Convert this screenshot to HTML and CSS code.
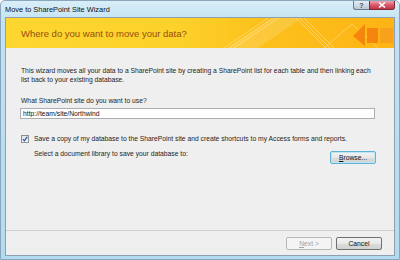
FILE: index.html
```html
<!DOCTYPE html>
<html lang="en">
<head>
    <meta charset="UTF-8">
    <title>Move to SharePoint Site Wizard</title>
    <link rel="stylesheet" href="styles.css">
</head>
<body>
    <div class="window">
        <div class="titlebar">
            <span class="window-title">Move to SharePoint Site Wizard</span>
            <div class="caption-buttons">
                <div class="caption-help">?</div>
                <div class="caption-close">
                    <svg width="8" height="6" viewBox="0 0 8 6"><path d="M1 0.5 L7 5.5 M7 0.5 L1 5.5" stroke="#fff" stroke-width="1.6"/></svg>
                </div>
            </div>
        </div>
        <div class="client">
            <div class="banner">
                <svg class="banner-art" width="388" height="30" viewBox="0 0 388 30">
                    <path d="M222 30 L266 0 L296 0 L252 30 Z" fill="#fff" fill-opacity="0.14"/>
                    <g stroke="#fff" stroke-opacity="0.4" stroke-width="0.8" fill="none">
                        <path d="M218 30 L262 0 M223 30 L267 0 M228 30 L272 0"/>
                        <path d="M290 0 L320 30 M294 0 L324 30 M298 0 L328 30"/>
                        <path d="M318 30 L346 6 L372 30"/>
                    </g>
                    <polygon points="347,18 359,6 359,28" fill="#f5850c"/>
                    <rect x="361" y="10" width="11" height="15" fill="#f5850c"/>
                    <rect x="374" y="10" width="13" height="15" fill="#f8a11c"/>
                </svg>
                <h1>Where do you want to move your data?</h1>
            </div>
            <div class="content">
                <p class="intro">This wizard moves all your data to a SharePoint site by creating a SharePoint list for each table and then linking each<br>list back to your existing database.</p>
                <label class="field-label" for="site">What SharePoint site do you want to use?</label>
                <input id="site" class="site-input" type="text" value="http://team/site/Northwind">
                <div class="check-row">
                    <span class="checkbox">
                        <svg width="6" height="6" viewBox="0 0 6 6"><path d="M0.8 3.2 L2.4 4.8 L5.2 0.8" stroke="#2a4fa8" stroke-width="1.2" fill="none"/></svg>
                    </span>
                    <span>Save a copy of my database to the SharePoint site and create shortcuts to my Access forms and reports.</span>
                </div>
                <div class="library-row">
                    <span>Select a document library to save your database to:</span>
                    <button class="btn btn-focus"><u>B</u>rowse...</button>
                </div>
            </div>
            <div class="footer">
                <button class="btn" disabled><u>N</u>ext &gt;</button>
                <button class="btn">Cancel</button>
            </div>
        </div>
    </div>
</body>
</html>
```

FILE: styles.css
```css
body {
    margin: 0;
    font-family: 'Liberation Sans', Arial, sans-serif;
    color: #1e1e1e;
    background: #fff;
}

/* --- Window frame --- */
.window {
    width: 400px; height: 260px; box-sizing: border-box;
    display: flex; flex-direction: column;
    border: 1px solid #8aa6bd; border-radius: 5px 5px 0 0;
    background: linear-gradient(to bottom, #d9eef9 0%, #c2e2f3 8%, #b3dbef 100%);
}
.titlebar { height: 16px; display: flex; align-items: flex-start; }
.window-title { font-size: 7.4px; padding: 4px 0 0 4px; color: #111; }
.caption-buttons { margin-left: auto; margin-right: 4px; display: flex; }
.caption-help, .caption-close {
    height: 9px; box-sizing: border-box; display: flex; align-items: center; justify-content: center;
    border: 1px solid #6b7d8e; border-top: none;
}
.caption-help {
    width: 16px; font-size: 7px; font-weight: 700; color: #3e4d5c;
    border-radius: 0 0 0 3px; border-right: none;
    background: linear-gradient(to bottom, #e6eef5, #b9c8d6);
}
.caption-close {
    width: 26px; border-color: #7a2c36; border-radius: 0 0 3px 0;
    background: linear-gradient(to bottom, #eba5ad 0%, #d9586a 50%, #c43448 100%);
}

/* --- Client area --- */
.client {
    flex: 1; margin: 0 4px 3px 4px;
    border: 1px solid #8e9fb0; background: #efefef;
    display: flex; flex-direction: column;
}
.banner {
    height: 30px; position: relative; display: flex; align-items: center; padding-left: 15px;
    background: linear-gradient(to right, #fdd62f 0%, #fcd12a 45%, #fcc11c 65%, #fdb414 100%);
}
.banner-art { position: absolute; left: 0; top: 0; }
.banner h1 { position: relative; margin: 0; font-size: 9.5px; font-weight: 400; color: #94500f; }

.content { flex: 1; padding: 18px 18px 0 15px; font-size: 6.75px; }
.intro { margin: 0; line-height: 9px; }
.field-label { display: block; margin-top: 12px; line-height: 9px; }
.site-input {
    display: block; width: 100%; height: 11px; box-sizing: border-box; margin: 3px 0 0 -1px;
    border: 1px solid #abadb3; background: #fff; padding: 0 2px;
    font: 6.75px 'Liberation Sans', Arial, sans-serif; color: #111;
}
.check-row { display: flex; align-items: center; gap: 5px; margin-top: 15px; line-height: 9px; }
.checkbox {
    width: 8px; height: 8px; box-sizing: border-box; display: flex; align-items: center; justify-content: center;
    border: 1px solid #8e8f8f; background: linear-gradient(to bottom, #dfe4ea, #f6f8fa);
}
.library-row { display: flex; align-items: flex-start; padding-left: 13px; margin-top: 6px; line-height: 9px; }
.library-row .btn { margin-left: auto; margin-top: 2px; }

/* --- Buttons --- */
.btn {
    width: 46px; height: 13px; padding: 0; box-sizing: border-box;
    font: 6.75px 'Liberation Sans', Arial, sans-serif; color: #111;
    border: 1px solid #707070; border-radius: 2px;
    background: linear-gradient(to bottom, #f3f3f3 0%, #e8e8e8 50%, #dcdcdc 51%, #d2d2d2 100%);
}
.btn-focus { border-color: #5fb4d6; box-shadow: inset 0 0 0 1px #bfe6f5; }
.btn:disabled { color: #a3a3a3; border-color: #b8b8b8; background: #f4f4f4; }

.footer {
    height: 25px; box-sizing: border-box; display: flex; justify-content: flex-end; gap: 4px;
    padding: 6px 12px 0 0; border-top: 1px solid #cfcfcf;
}
```
